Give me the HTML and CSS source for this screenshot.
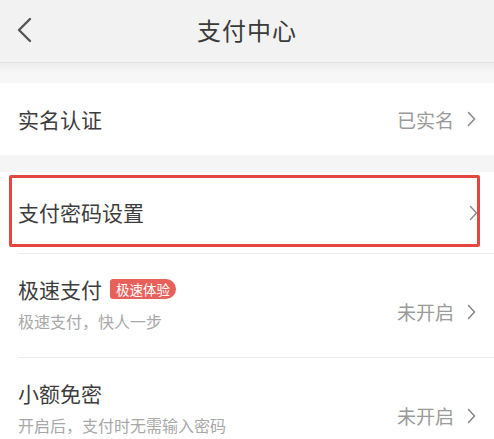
FILE: index.html
```html
<!DOCTYPE html>
<html lang="zh">
<head>
<meta charset="utf-8">
<link rel="stylesheet" href="styles.css">
</head>
<body>
<div class="page">
  <header class="header">
    <svg class="back" width="16" height="26" viewBox="0 0 16 26"><path d="M14 2 L3 13 L14 24" fill="none" stroke="#555" stroke-width="2.4" stroke-linecap="round" stroke-linejoin="round"/></svg>
    <div class="title">支付中心</div>
  </header>
  <div class="shade"></div>
  <section class="group">
    <div class="row row-short">
      <div class="label">实名认证</div>
      <div class="right"><span class="value">已实名</span><svg class="chev" width="9" height="16" viewBox="0 0 9 16"><path d="M1.5 1.5 L7.5 8 L1.5 14.5" fill="none" stroke="#8a8a8a" stroke-width="1.6" stroke-linecap="round" stroke-linejoin="round"/></svg></div>
    </div>
  </section>
  <section class="group group-gap">
    <div class="row row-mid highlighted">
      <div class="label">支付密码设置</div>
      <div class="right"><svg class="chev" width="9" height="16" viewBox="0 0 9 16"><path d="M1.5 1.5 L7.5 8 L1.5 14.5" fill="none" stroke="#8a8a8a" stroke-width="1.4" stroke-linecap="round" stroke-linejoin="round"/></svg></div>
    </div>
    <div class="sep"></div>
    <div class="row row-tall">
      <div class="texts">
        <div class="label-line"><span class="label">极速支付</span><span class="badge">极速体验</span></div>
        <div class="sub">极速支付，快人一步</div>
      </div>
      <div class="right"><span class="value">未开启</span><svg class="chev" width="9" height="16" viewBox="0 0 9 16"><path d="M1.5 1.5 L7.5 8 L1.5 14.5" fill="none" stroke="#8a8a8a" stroke-width="1.6" stroke-linecap="round" stroke-linejoin="round"/></svg></div>
    </div>
    <div class="sep"></div>
    <div class="row row-tall">
      <div class="texts">
        <div class="label-line"><span class="label">小额免密</span></div>
        <div class="sub">开启后，支付时无需输入密码</div>
      </div>
      <div class="right"><span class="value">未开启</span><svg class="chev" width="9" height="16" viewBox="0 0 9 16"><path d="M1.5 1.5 L7.5 8 L1.5 14.5" fill="none" stroke="#8a8a8a" stroke-width="1.6" stroke-linecap="round" stroke-linejoin="round"/></svg></div>
    </div>
  </section>
</div>
</body>
</html>
```
FILE: styles.css
```css
html, body {
  margin: 0;
  padding: 0;
  background: #f5f5f5;
}
body {
  font-family: "Noto Sans CJK SC", "Noto Sans", sans-serif;
  color: #333;
  width: 494px;
  height: 439px;
  overflow: hidden;
}
.page {
  display: flex;
  flex-direction: column;
}
.header {
  height: 62px;
  background: #f2f2f2;
  border-bottom: 1px solid #e2e2e2;
  display: flex;
  align-items: center;
  justify-content: center;
  position: relative;
}
.back {
  position: absolute;
  left: 16px;
  top: 17px;
}
.title {
  font-size: 24px;
  color: #3a3a3a;
  letter-spacing: 1px;
  line-height: 1;
  margin-top: -2px;
}
.shade {
  height: 20px;
  background: linear-gradient(#ececec, #f6f6f6 40%, #f7f7f7);
}
.group {
  background: #fff;
  display: flex;
  flex-direction: column;
}
.group-gap {
  margin-top: 17px;
}
.row {
  display: flex;
  align-items: center;
  justify-content: space-between;
  padding: 0 18px 0 18px;
  background: #fff;
}
.row-short {
  height: 72px;
}
.row-mid {
  height: 81px;
  position: relative;
}
.row-tall {
  height: 103px;
}
.highlighted::after {
  content: "";
  position: absolute;
  left: 9px;
  right: 14px;
  top: 3px;
  bottom: 6px;
  border: 3px solid #e5473f;
  border-radius: 2px;
}
.highlighted .chev {
  margin-right: -2px;
}
.label {
  font-size: 21px;
  color: #3d3d3d;
  line-height: 1;
}
.right {
  display: flex;
  align-items: center;
  gap: 13px;
}
.value {
  font-size: 19px;
  color: #9a9a9a;
  line-height: 1;
}
.chev {
  display: block;
}
.sep {
  height: 1px;
  background: #ececec;
  margin-left: 18px;
}
.texts {
  display: flex;
  flex-direction: column;
  gap: 13px;
  margin-top: -4px;
}
.label-line {
  display: flex;
  align-items: center;
  gap: 8px;
}
.badge {
  background: #e8605a;
  color: #fff;
  font-size: 13.5px;
  line-height: 20px;
  height: 20px;
  padding: 0 6px;
  border-radius: 3px 10px 10px 3px;
}
.sub {
  font-size: 16px;
  color: #a8a8a8;
  line-height: 1;
}
.row-tall .right {
  margin-top: 12px;
}
```
